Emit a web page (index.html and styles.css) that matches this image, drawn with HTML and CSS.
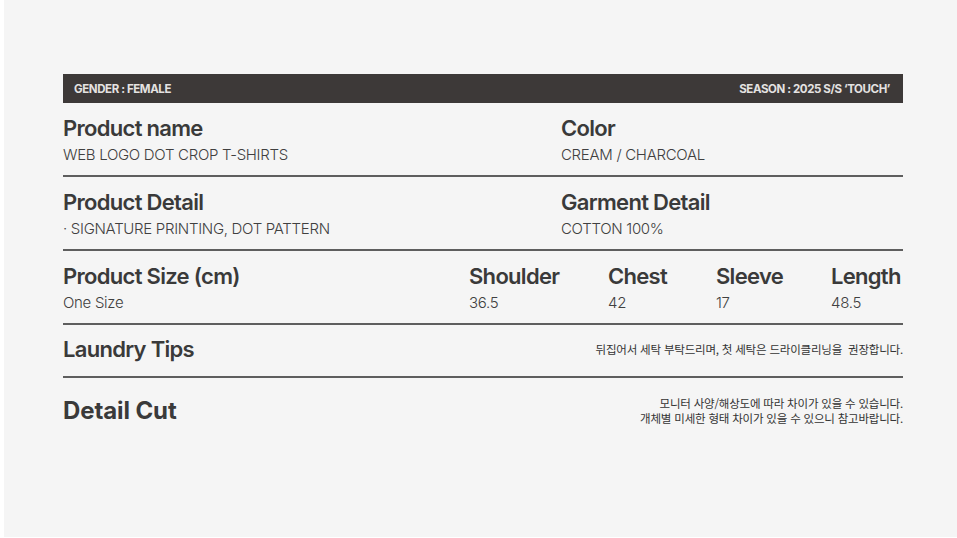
FILE: index.html
```html
<!DOCTYPE html>
<html lang="ko">
<head>
<meta charset="utf-8">
<title>Product Info</title>
<link rel="stylesheet" href="styles.css">
</head>
<body>
<div class="page">
  <div class="sheet">
    <div class="bar">
      <span>GENDER : FEMALE</span>
      <span>SEASON : 2025 S/S ‘TOUCH’</span>
    </div>

    <div class="row two">
      <div class="cell">
        <h3 class="title">Product name</h3>
        <p class="sub">WEB LOGO DOT CROP T-SHIRTS</p>
      </div>
      <div class="cell">
        <h3 class="title">Color</h3>
        <p class="sub">CREAM / CHARCOAL</p>
      </div>
    </div>

    <div class="row two">
      <div class="cell">
        <h3 class="title">Product Detail</h3>
        <p class="sub">· SIGNATURE PRINTING, DOT PATTERN</p>
      </div>
      <div class="cell">
        <h3 class="title">Garment Detail</h3>
        <p class="sub">COTTON 100%</p>
      </div>
    </div>

    <div class="row size">
      <div class="cell">
        <h3 class="title">Product Size (cm)</h3>
        <p class="sub small">One Size</p>
      </div>
      <div class="cell">
        <h3 class="title">Shoulder</h3>
        <p class="sub small">36.5</p>
      </div>
      <div class="cell">
        <h3 class="title">Chest</h3>
        <p class="sub small">42</p>
      </div>
      <div class="cell">
        <h3 class="title">Sleeve</h3>
        <p class="sub small">17</p>
      </div>
      <div class="cell">
        <h3 class="title">Length</h3>
        <p class="sub small">48.5</p>
      </div>
    </div>

    <div class="row inline laundry">
      <h3 class="title">Laundry Tips</h3>
      <p class="note">뒤집어서 세탁 부탁드리며, 첫 세탁은 드라이클리닝을&nbsp; 권장합니다.</p>
    </div>

    <div class="row inline detail">
      <h3 class="title big">Detail Cut</h3>
      <p class="note">모니터 사양/해상도에 따라 차이가 있을 수 있습니다.<br>개체별 미세한 형태 차이가 있을 수 있으니 참고바랍니다.</p>
    </div>
  </div>
</div>
</body>
</html>
```

FILE: styles.css
```css
* { box-sizing: border-box; }

html, body {
  margin: 0;
  padding: 0;
  background: #ffffff;
}

body {
  font-family: Inter, "Noto Sans", "Noto Sans CJK KR", sans-serif;
  color: #3a3a3a;
}

.page {
  margin-left: 4px;
  height: 537px;
  background: #f5f5f5;
  padding: 74px 0 0 59px;
}

.sheet {
  width: 840px;
}

.bar {
  height: 29px;
  background: #3d3938;
  color: #e4e2e1;
  display: flex;
  justify-content: space-between;
  align-items: center;
  padding: 0 13px 0 11px;
  font-size: 11.5px;
  font-weight: 700;
  letter-spacing: -0.4px;
}

.row {
  padding: 12px 0 10px;
  border-bottom: 2px solid #5e5e5e;
}

.two {
  display: grid;
  grid-template-columns: 498px 1fr;
}

.size {
  display: grid;
  grid-template-columns: 406px 139px 108px 115px 1fr;
}

.title {
  margin: 0;
  font-size: 22px;
  line-height: 26px;
  font-weight: 600;
  letter-spacing: -0.7px;
  color: #3a3a3a;
}

.sub {
  margin: 4px 0 0;
  font-size: 15px;
  line-height: 20px;
  font-weight: 300;
  letter-spacing: -0.3px;
  color: #404040;
}

.sub.small {
  font-size: 15px;
}

.inline {
  display: flex;
  justify-content: space-between;
  align-items: center;
}

.laundry {
  padding: 11px 0 14px;
}

.detail {
  border-bottom: none;
  padding: 18px 0 0;
}

.title.big {
  font-size: 24px;
  line-height: 28px;
  font-weight: 700;
  letter-spacing: -0.1px;
}

.note {
  margin: 0;
  text-align: right;
  font-family: "Noto Sans CJK KR", sans-serif;
  font-size: 11.5px;
  line-height: 15px;
  letter-spacing: -0.2px;
  color: #333333;
}
```
